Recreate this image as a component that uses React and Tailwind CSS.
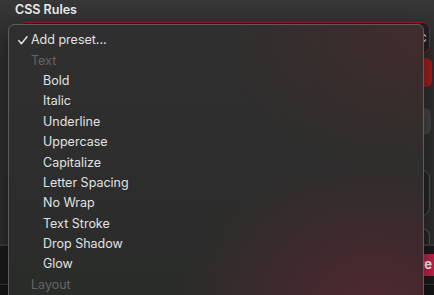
import React from "react";

const groups = [
  { header: "Text", items: ["Bold", "Italic", "Underline", "Uppercase", "Capitalize", "Letter Spacing", "No Wrap", "Text Stroke", "Drop Shadow", "Glow"] },
  { header: "Layout", items: [] },
];

export default function App() {
  return (
    <div className="relative w-[434px] h-[295px] overflow-hidden bg-[#2f2f2f] font-['Inter',sans-serif]">
      <div className="flex flex-col h-full">
        <div className="flex-1 flex flex-col pl-[15px] pr-[4px] bg-[linear-gradient(180deg,#373737_0px,#303030_40px,#2e2e2e_100%)]">
          <div className="h-[22px] pt-[2px] text-[12.5px] font-semibold text-[#ececec] leading-[16px]">CSS Rules</div>
          <div className="ml-[2px] h-[31px] border-[1.5px] border-[#9a1c2e] rounded-[7px] bg-[#232323] flex items-center justify-end pr-[2px]">
            <svg width="6" height="10" viewBox="0 0 6 10" className="text-[#cfcfcf]">
              <path d="M1 3.5 L3 1.5 L5 3.5 M1 6.5 L3 8.5 L5 6.5" fill="none" stroke="currentColor" strokeWidth="1.2" />
            </svg>
          </div>
          <div className="mt-[5px] h-[29px] rounded-[6px] bg-[#a41f20] mr-[-2px]" />
          <div className="mt-[21px] h-[27px] rounded-[7px] bg-[#454545] mr-[-1px]" />
          <div className="mt-[35px] h-[46px] rounded-[8px] border border-[#575757] bg-[#262626]" />
          <div className="mt-[12px] h-[16px] rounded-t-[8px] border border-b-0 border-[#575757] bg-[#262626]" />
        </div>
        <div className="h-[41px] border-t-[2px] border-[#3d3d3d] bg-[#1c1c1c] flex items-center justify-end">
          <div className="h-[22px] px-[10px] mr-[-8px] rounded-[5px] bg-[#c8234a] text-white text-[13px] font-bold flex items-center">Save</div>
        </div>
        <div className="h-[11px] border-t border-[#3a3a3a] bg-[#161616]" />
      </div>

      <div className="absolute left-[8px] top-[24px] w-[416px] h-[290px] rounded-[6px] border border-[#5c5c5c] bg-[#2d2e2d] bg-[image:radial-gradient(ellipse_at_100%_5%,rgba(100,40,40,0.35),transparent_35%),radial-gradient(ellipse_at_88%_100%,rgba(120,35,55,0.5),transparent_38%),linear-gradient(180deg,#2f2f2f,#2a2c2a)] shadow-[0_8px_24px_rgba(0,0,0,0.5)] pt-[5px] text-[12.5px] leading-[16px]">
        <div className="h-[20.4px] flex items-center text-[#e2e2e2]">
          <div className="w-[22px] flex justify-end pr-[3px]">
            <svg width="10" height="9" viewBox="0 0 10 9">
              <path d="M0.8 4.6 L3.4 7.8 L9 0.8" fill="none" stroke="#e2e2e2" strokeWidth="1.5" strokeLinecap="round" strokeLinejoin="round" />
            </svg>
          </div>
          <span>Add preset...</span>
        </div>
        {groups.map((g) => (
          <div key={g.header}>
            <div className="h-[20.4px] flex items-center pl-[22px] text-[#646464]">{g.header}</div>
            {g.items.map((it) => (
              <div key={it} className="h-[20.4px] flex items-center pl-[34px] text-[#e2e2e2]">{it}</div>
            ))}
          </div>
        ))}
      </div>
    </div>
  );
}
